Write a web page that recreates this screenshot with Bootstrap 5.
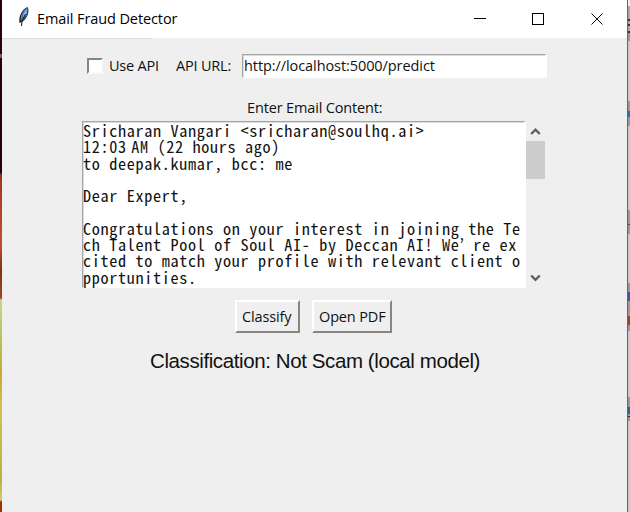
<!DOCTYPE html>
<html lang="en">
<head>
<meta charset="utf-8">
<title>Email Fraud Detector</title>
<link href="https://cdn.jsdelivr.net/npm/bootstrap@5.3.0/dist/css/bootstrap.min.css" rel="stylesheet">
<style>
body{width:630px;height:512px;font:14.5px/20px "Open Sans","Noto Sans",sans-serif;color:#111;background:#c8c8c8}
.edge-left{width:2px;background:linear-gradient(#27000b 0 54px,#76556a 54px 58px,#23000a 58px 173px,#6c3040 174px,#a43b1b 180px,#bb512c 245px,#823019 270px,#a84524 298px,#cad38c 300px,#b9bd58 345px,#c9a936 374px,#cfc251 410px,#b6b247 480px,#d4ca69 500px,#a82b0b 502px)}
.edge-right{width:2px;background:linear-gradient(#eee 0 6px,#aaa 6px 19px,#334 19px 21px,#aaa 21px 24px,#334 24px 26px,#aaa 26px 31px,#334 31px 33px,#999 33px 41px,#c9c9c9 41px 101px,#999 101px 111px,#27759d 111px 117px,#999 117px 126px,#c9c9c9 126px 210px,#999 210px 224px,#543 224px 225px,#999 225px 234px,#c9c9c9 234px 283px,#999 283px 292px,#4056a0 292px 301px,#999 301px 316px,#884b2c 316px 325px,#999 325px 331px,#c9c9c9 331px 397px,#999 397px 407px,#27658d 407px 414px,#999 414px 416px,#222 416px 417px,#999 417px 421px,#c9c9c9 421px)}
.app-window{background:#efefef;border-right:1px solid #666}
.titlebar{height:38px;background:#fff;color:#000}
.title-text{font-size:14.5px;margin-left:5px;letter-spacing:-.1px}
.title-rule{width:149px;height:1px;background:#dcdcdc}
.fit{white-space:nowrap}
.tight{letter-spacing:-.15px}
.url-text{letter-spacing:-.08px}
.api-row{height:24px;margin-top:15px;padding-left:85px}
.check-box{width:16px;height:16px;background:#fff;border:2px solid;border-color:#858585 #fafafa #fafafa #858585}
.use-api{margin-left:6px;width:51px;letter-spacing:-.2px}
.url-label{margin-left:16px;width:57px;letter-spacing:-.2px}
.sunken{background:#fff;border:solid;border-width:1px 2px 1px 1px;border-color:#a4a4a4 #fff #fff #a4a4a4;box-shadow:inset 1px 1px #dcdcdc}
.url-field{width:305px;height:24px;padding-left:1px;margin-left:9px}
.prompt{height:20px;margin-top:20px;padding-left:245px}
.mail-row{height:167px;margin:3px 0 0 80px}
.mail-box{width:444px}
.mail-text{font:16.2px/16.3px "Noto Sans CJK JP",monospace;font-feature-settings:"hwid";letter-spacing:.66px;white-space:pre;color:#111}
.meridiem{margin-left:4.4px}
.scroll-track{width:20px}
.scroll-thumb{width:19px;height:38px;background:#cdcdcd}
.button-row{margin:12px 0 0 233px;gap:12px}
.raised{height:33px;border:2px solid;border-color:#fff #858585 #858585 #fff;background:#efefef;padding:0 0 0 5px;text-align:left;color:#111}
.classify{width:65px}
.open-pdf{width:80px}
.result{font:20.5px/26px "Liberation Sans",sans-serif;letter-spacing:-.4px;margin:15px 0 0 148px;color:#111}
</style>
<script src="https://cdn.jsdelivr.net/npm/bootstrap@5.3.0/dist/js/bootstrap.bundle.min.js"></script>
</head>
<body class="d-flex overflow-hidden">
<div class="edge-left flex-shrink-0"></div>
<main class="app-window flex-grow-1 h-100">
<header class="titlebar d-flex align-items-center">
<svg width="14" height="20" viewBox="0 0 14 20" class="flex-shrink-0 ms-3 mb-1"><path d="M1.5 16C0 10 4 2 9.5 0C12 3 9.5 12 4 15Z" fill="#26313d"/><path d="M2.8 13C2.5 7 6 2 9.5 1C10 6 8 10 4 14Z" fill="#4b80bb"/><path d="M5 10C6 5 8 3 9 2L8 8Z" fill="#91bce8"/><path d="M3.5 19L4 14L7.5 7" fill="none" stroke="#111"/></svg>
<span class="title-text fit">Email Fraud Detector</span>
<svg class="ms-auto flex-shrink-0" width="153" height="38" viewBox="474 0 153 38" fill="none" stroke="#000" shape-rendering="crispEdges"><path d="M474 18.5H486M532.5 13.5H543.5V24.5H532.5Z"/><path d="M591.5 13.5L602.5 24.5M602.5 13.5L591.5 24.5" shape-rendering="auto"/></svg>
</header>
<div class="title-rule"></div>
<div class="api-row d-flex align-items-center">
<span class="check-box"></span><span class="fit use-api">Use API</span><span class="fit url-label">API URL:</span>
<div class="sunken url-field d-flex align-items-center"><span class="fit url-text">http://localhost:5000/predict</span></div>
</div>
<div class="prompt"><span class="fit tight">Enter Email Content:</span></div>
<div class="mail-row d-flex">
<div class="sunken mail-box"><div class="mail-text">Sricharan Vangari &lt;sricharan@soulhq.ai&gt;
12:03<span class="meridiem">AM (22 hours ago)</span>
to deepak.kumar, bcc: me

Dear Expert,

Congratulations on your interest in joining the Te
ch Talent Pool of Soul AI- by Deccan AI! We’ re ex
cited to match your profile with relevant client o
pportunities.</div></div>
<div class="scroll-track d-flex flex-column justify-content-between">
<div><svg class="d-block" width="19" height="20" fill="none" stroke="#606060" stroke-width="2.4"><path d="M5.2 13L9.5 8.7L13.8 13"/></svg><div class="scroll-thumb"></div></div>
<svg width="19" height="21" fill="none" stroke="#606060" stroke-width="2.4"><path d="M5.2 8.5L9.5 12.8L13.8 8.5"/></svg>
</div></div>
<div class="button-row d-flex"><button class="raised classify"><span class="fit tight">Classify</span></button><button class="raised open-pdf"><span class="fit tight">Open PDF</span></button></div>
<div class="result"><span class="fit">Classification: Not Scam (local model)</span></div>
</main>
<div class="edge-right flex-shrink-0"></div>
</body>
</html>
